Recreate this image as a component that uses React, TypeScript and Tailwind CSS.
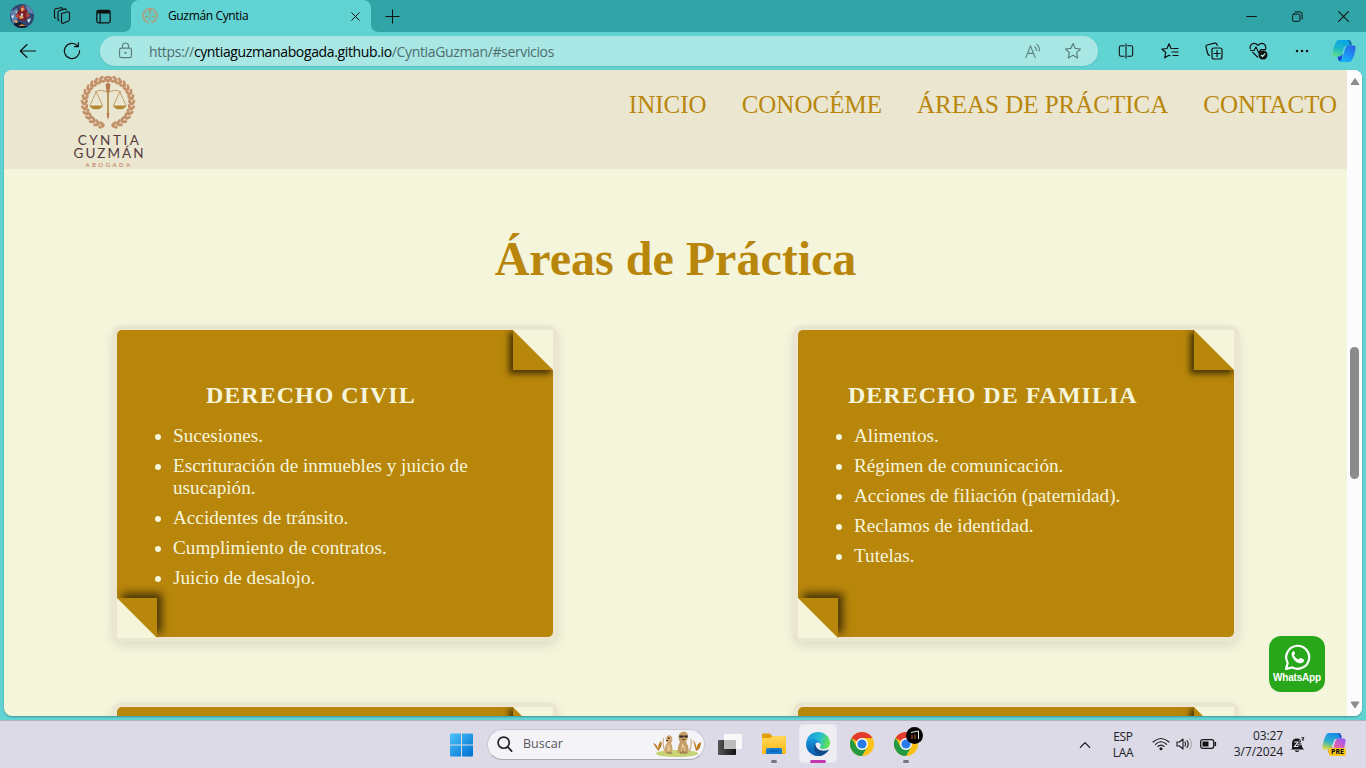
import React from "react";

type IconProps = { d: string; size?: number; stroke?: string; width?: number; className?: string; children?: React.ReactNode };

function Icon({ d, size = 18, stroke = "#111", width = 1.2, className = "", children }: IconProps) {
  return (
    <svg width={size} height={size} viewBox="0 0 18 18" fill="none" stroke={stroke} strokeWidth={width} strokeLinecap="round" strokeLinejoin="round" className={className}>
      <path d={d} />
      {children}
    </svg>
  );
}

const STAR = "M9 1.5 11.2 6.4 16.5 7 12.6 10.6 13.7 15.9 9 13.2 4.3 15.9 5.4 10.6 1.5 7 6.8 6.4Z";

function Avatar() {
  return (
    <svg width="24" height="24" viewBox="0 0 24 24">
      <defs><clipPath id="av"><circle cx="12" cy="12" r="12" /></clipPath></defs>
      <g clipPath="url(#av)">
        <rect width="24" height="24" fill="#2d4672" />
        <path d="M0 8 7 4 10 12 3 20ZM15 1 24 4V10L18 9Z" fill="#5e80ab" />
        <path d="M8 7 12 3 17 6 18 12 15 17 9 16 6 12Z" fill="#7d2027" />
        <path d="M10 3 14 1 15 6 12 8ZM5 11 9 10 8 15ZM16 8 20 11 17 15Z" fill="#b84a3c" />
        <path d="M11 4h3l-1 3h-2ZM9 12l3-1 2 3-4 1ZM3 17 7 16 8 20Z" fill="#d9a266" />
        <path d="M11 9.500h2v2h-2ZM5 8 7 7 7 9ZM17 16 21 14 19 19ZM1 12 4 11 3 15Z" fill="#d8e9f4" />
        <path d="M4 20 10 18 15 21 18 24H5Z" fill="#141a2c" />
        <path d="M8 22 12 20 16 22Z" fill="#c78b35" />
      </g>
    </svg>
  );
}

function CopilotMark({ size, pre = false }: { size: number; pre?: boolean }) {
  const id = pre ? "cp" : "ce";
  return (
    <svg width={size} height={size} viewBox="0 0 24 24">
      <defs>
        <linearGradient id={id + "a"} x1="0.5" y1="0" x2="0.2" y2="1">
          <stop offset="0" stopColor={pre ? "#1b8de8" : "#0aa5e6"} />
          <stop offset=".5" stopColor={pre ? "#2eb0c8" : "#19b5c8"} />
          <stop offset="1" stopColor={pre ? "#dfdc3c" : "#5fe08a"} />
        </linearGradient>
        <linearGradient id={id + "b"} x1="0.8" y1="0" x2="0.2" y2="1">
          <stop offset="0" stopColor={pre ? "#9b5cf2" : "#2a63e0"} />
          <stop offset=".5" stopColor={pre ? "#e05fb0" : "#1e8cf3"} />
          <stop offset="1" stopColor={pre ? "#f9a15c" : "#12b6f8"} />
        </linearGradient>
      </defs>
      <path d="M13 1h3.500q2 0 2.700 2L20 6.500h-5.500L11 8Z" fill={pre ? "#2453c9" : "#0b6aa8"} />
      <path d="M5.500 15h5l-1 7.500H9q-2.200 0-3-2.500Z" fill={pre ? "#f0a13a" : "#1746d8"} />
      <path d="M7 1h7.500q2 0 2.500 1.800l1 3.700h-3.500q-2 0-2.700 2.200L9.500 16Q9 17.500 7 17.500H2.500Q0 17.500.4 14.500 1.200 8 4 3 5 1 7 1Z" fill={`url(#${id}a)`} />
      <path d="M17 23H9.500q-2 0-1-1.800 1.600-.8 2.200-3L13.200 9.300Q14 6.500 16.500 6.500h5Q24 6.500 23.600 9.500 22.800 16 20 21 19 23 17 23Z" fill={`url(#${id}b)`} />
    </svg>
  );
}

const leaves = Array.from({ length: 14 }, (_, i) => {
  const angle = 102 + i * 12.4;
  const a = (angle * Math.PI) / 180;
  return { x: 28 + 24 * Math.cos(a), y: 27 + 24 * Math.sin(a), r: angle + 90 };
});

function LogoDrawing({ size }: { size: number }) {
  const side = leaves.map((l, i) => (
    <g key={i} transform={`translate(${l.x} ${l.y}) rotate(${l.r})`}>
      <ellipse cx="1.500" cy="-1.600" rx="3.300" ry="1.500" transform="rotate(-28 1.500 -1.600)" />
      <ellipse cx="1.500" cy="1.600" rx="3.300" ry="1.500" transform="rotate(28 1.500 1.600)" />
    </g>
  ));
  return (
    <svg width={size} height={size * 0.96} viewBox="0 0 56 54">
      <g fill="#c4926a">{side}</g>
      <g fill="#c4926a" transform="translate(56 0) scale(-1 1)">{side}</g>
      <g stroke="#b28a4e" fill="none" strokeWidth=".8">
        <path d="M15 16Q22 13 28 17Q34 13 41 16M16 16 9.500 30M16 16 22.500 30M40 16 33.500 30M40 16 46.500 30" />
        <path d="M28 9V42" strokeWidth="1.800" />
      </g>
      <path d="M9 30h14q-2 4-7 4t-7-4ZM33 30h14q-2 4-7 4t-7-4Z" fill="#b18a32" />
      <path d="M25.500 8.500 28 7 30.500 8.500 29.500 16h-3ZM26.500 38h3l-1.500 7Z" fill="#b77b50" />
    </svg>
  );
}

function TabStrip() {
  return (
    <div className="flex h-8 items-center bg-[#31a4a8]">
      <div className="ml-[10px] flex w-6 justify-center"><Avatar /></div>
      <div className="ml-[19px] flex w-[18px]">
        <Icon width={1.1} d="M8.500 6.500 15 4.800Q16.300 4.600 16.500 6V12.500Q16.400 13.500 15.500 13.900L10 16.300Q8.500 16.600 8.500 15V7.500Q8.500 6.600 9.500 6.200M6 13.500Q5 13.800 5 12.500V5Q5 4 6 3.700L12 1.900Q13 1.700 13.300 2.900M2.800 11Q1.500 11.300 1.500 10V3Q1.500 2 2.500 1.700L8 .7Q9 .5 9.300 1.600" />
      </div>
      <div className="ml-[25px] flex w-4">
        <Icon size={15} width={1.5} d="M3 1.500H15Q17 1.500 17 3.500V14.500Q17 16.500 15 16.500H3Q1 16.500 1 14.500V3.500Q1 1.500 3 1.500ZM5 6V16"><path d="M1.500 3.800H16.500" strokeWidth="3.400" strokeLinecap="butt" /></Icon>
      </div>
      <div className="relative ml-[19px] flex h-8 w-[240px] items-center rounded-t-lg bg-[#62d3d3]">
        <svg className="absolute bottom-0 -left-2" width="8" height="8"><path d="M8 0V8H0Q8 8 8 0Z" fill="#62d3d3" /></svg>
        <svg className="absolute -right-2 bottom-0" width="8" height="8"><path d="M0 0V8H8Q0 8 0 0Z" fill="#62d3d3" /></svg>
        <div className="ml-[11px] w-4"><LogoDrawing size={16} /></div>
        <span className="ml-[10px] w-[180px] text-[12px] tracking-[-0.36px] whitespace-nowrap text-black">Guzmán Cyntia</span>
        <Icon size={9} width={2} d="M1.500 1.500 16.500 16.500M16.500 1.500 1.500 16.500" className="ml-[3px]" />
      </div>
      <div className="ml-[14px] flex w-[15px]"><Icon size={15} width={1.2} d="M9 1V17M1 9H17" /></div>
      <div className="ml-auto flex">
        <div className="flex w-[46px] justify-center"><Icon size={11} width={1.6} d="M1 9H17" /></div>
        <div className="flex w-[46px] justify-center"><Icon size={11} width={1.6} d="M3 5H11Q13 5 13 7V15Q13 17 11 17H3Q1 17 1 15V7Q1 5 3 5ZM5 1.500H13Q16.500 1.500 16.500 5V13" /></div>
        <div className="flex w-[46px] justify-center"><Icon size={11} width={1.7} d="M1 1 17 17M17 1 1 17" /></div>
      </div>
    </div>
  );
}

function Cell({ children }: { children: React.ReactNode }) {
  return <div className="flex w-11 justify-center">{children}</div>;
}

function Toolbar() {
  return (
    <div className="flex h-[38px] items-center bg-[#62d3d3] pl-[6px]">
      <Cell><Icon d="M16.500 9H1.500M8 2.500 1.300 9 8 15.500" width={1.1} /></Cell>
      <Cell><Icon d="M16.600 8.500A7.600 7.600 0 1 1 14.600 3.800M15.400 .8V4.600H11.500" width={1.2} /></Cell>
      <div className="ml-[6px] flex h-[30px] w-[998px] items-center rounded-full bg-[#a9e7e5] shadow-[0_1px_2px_rgba(0,80,80,0.12)]">
        <Icon stroke="#5c7f7e" size={17} className="-mt-px ml-[17px]" d="M4.500 6.500H13.500Q15.300 6.500 15.300 8.300V14.700Q15.300 16.500 13.500 16.500H4.500Q2.700 16.500 2.700 14.700V8.300Q2.700 6.500 4.500 6.500ZM5.800 6.500V4.400Q5.800 1 9 1T12.200 4.400V6.500"><circle cx="9" cy="11.500" r=".6" fill="#5c7f7e" /></Icon>
        <span className="ml-[15px] flex-1 text-[14px] tracking-[-0.36px] whitespace-nowrap text-[#4f6d6d]">https://<span className="text-black">cyntiaguzmanabogada.github.io</span>/CyntiaGuzman/#servicios</span>
        <Icon stroke="#5c8080" size={17} d="M2 15.500 6.900 3 11.800 15.500M3.700 11H10M11.500 4Q13.500 5.500 13 8M13.500 1.500Q17 4.500 16 8.500" />
        <Icon stroke="#5c8080" className="mr-[16px] ml-[23px]" d={STAR} />
      </div>
      <div className="ml-[6px] flex items-center">
        <Cell><Icon size={16} width={1.2} d="M7 3H3.500Q1.500 3 1.500 5V13Q1.500 15 3.500 15H7M11 3H14.500Q16.500 3 16.500 5V13Q16.500 15 14.500 15H11M9 1V17" /></Cell>
        <Cell><Icon size={18} width={1.2} d="M10.800 6.500H10L8 1.800 6 6.500 1 7.200 4.800 10.500 3.700 15.800 8 13.200 9 13.700M12 6.500H17M11 10H17M12 13.500H17" /></Cell>
        <Cell><Icon size={18} width={1.2} d="M9 6H15Q17 6 17 8V15Q17 17 15 17H9Q7 17 7 15V8Q7 6 9 6ZM12 8.500V14.500M9 11.500H15M4.500 13.500Q3 13 2.500 11L1 5Q.7 3.500 2.200 3L9.500 1.200Q11.500 .8 12 2.500L12.300 3.500" /></Cell>
        <Cell><svg width="19" height="18" viewBox="0 0 19 18" fill="none" stroke="#111" strokeWidth="1.200" strokeLinejoin="round"><path d="M1.500 7.200Q.2 4 3 2 6 .2 9 3.300 12 .2 15 2 17.500 4 16.600 7M3.500 10 9 15.500M1 8.500H5L7 5 9.800 11 11.500 7.700H17" /><circle cx="14" cy="13" r="4.500" fill="#111" stroke="none" /><path d="m12 13 1.500 1.500 2.700-3" stroke="#a9e7e5" /></svg></Cell>
        <Cell><svg width="14" height="4"><g fill="#111"><circle cx="2" cy="2" r="1.250" /><circle cx="7" cy="2" r="1.250" /><circle cx="12" cy="2" r="1.250" /></g></svg></Cell>
        <div className="flex w-10 justify-center"><CopilotMark size={24} /></div>
      </div>
    </div>
  );
}

function Card({ title, items, offset }: { title: string; items: string[]; offset: string }) {
  return (
    <article className="relative h-[307px] w-[436px] rounded-[5px] bg-[#b8860b] px-8 pt-[51px] text-[#f5f5dc] shadow-[0_0_0_5px_#ebe6d0,0_4px_12px_4px_rgba(0,0,0,0.12)]">
      <svg className="absolute top-0 right-0 size-10 shadow-[-3px_3px_6px_1px_rgba(0,0,0,0.6)] [clip-path:inset(0_0_-14px_-14px)]" viewBox="0 0 40 40"><rect width="40" height="40" fill="#b8860b" /><path d="M0 0H40V40Z" fill="#f5f5dc" /></svg>
      <svg className="absolute -bottom-px left-0 size-10 shadow-[5px_-5px_8px_rgba(0,0,0,0.6)] [clip-path:polygon(0_-18px,58px_-18px,58px_39px,40px_39px,40px_40px,0_40px)]" viewBox="0 0 40 40"><rect width="40" height="40" fill="#b8860b" /><path d="M0 0V40H40Z" fill="#f5f5dc" /></svg>
      <h2 className={`text-[24px] leading-[28px] font-bold tracking-[1px] whitespace-nowrap ${offset}`}>{title}</h2>
      <ul className="mt-4 list-disc pl-6 text-[19.2px] leading-[22px]">
        {items.map((t) => <li key={t} className="mb-2 max-w-[330px]">{t}</li>)}
      </ul>
    </article>
  );
}

function Page() {
  return (
    <div className="relative mx-1 flex h-[646px] overflow-hidden rounded-lg bg-[#f5f5dc] shadow-[0_1px_2px_rgba(0,60,60,0.4)]">
      <div className="flex h-[646px] w-[1343px] flex-col overflow-hidden font-['Liberation_Serif',serif]">
        <header className="flex h-[99px] shrink-0 justify-between bg-[#ebe6d0]">
          <div className="ml-[64px] flex w-20 flex-col items-center pt-[6px] font-[Lato,sans-serif]">
            <LogoDrawing size={56} />
            <div className="mt-[5px] ml-[3px] text-[13.500px] leading-[13px] tracking-[2.500px] text-[#54393e]">CYNTIA</div>
            <div className="ml-[3px] text-[13.500px] leading-[13px] tracking-[2px] whitespace-nowrap text-[#54393e]">GUZMÁN</div>
            <div className="ml-[2px] text-[6px] leading-[9px] tracking-[2.500px] text-[#b97555]">ABOGADA</div>
          </div>
          <nav className="mr-[10px] flex gap-[35px] pt-[20px] text-[25px] leading-[29px] whitespace-nowrap text-[#b8860b]">
            <a>INICIO</a><a>CONOCÉME</a><a>ÁREAS DE PRÁCTICA</a><a>CONTACTO</a>
          </nav>
        </header>
        <h1 className="mt-[62px] text-center text-[48px] leading-[55px] font-bold text-[#b8860b]">Áreas de Práctica</h1>
        <div className="mt-[44px] ml-[113px] grid grid-cols-[436px_436px] gap-x-[245px] gap-y-[70px]">
          <Card title="DERECHO CIVIL" offset="ml-[57px]" items={["Sucesiones.", "Escrituración de inmuebles y juicio de usucapión.", "Accidentes de tránsito.", "Cumplimiento de contratos.", "Juicio de desalojo."]} />
          <Card title="DERECHO DE FAMILIA" offset="ml-[18px]" items={["Alimentos.", "Régimen de comunicación.", "Acciones de filiación (paternidad).", "Reclamos de identidad.", "Tutelas."]} />
          <Card title="" offset="" items={[]} />
          <Card title="" offset="" items={[]} />
        </div>
      </div>
      <div className="flex w-[15px] flex-col items-center bg-[#fcfcfc]">
        <svg width="10" height="7" className="mt-[8px]"><path d="M5 .5 9 6.500H1Z" fill="#8b8b8b" stroke="#8b8b8b" strokeLinejoin="round" /></svg>
        <div className="mt-[262px] h-[132px] w-[9px] rounded-full bg-[#8b8b8b]" />
        <svg width="10" height="8" className="mt-auto mb-[7px]"><path d="M5 7 9 1H1Z" fill="#8b8b8b" stroke="#8b8b8b" strokeLinejoin="round" /></svg>
      </div>
      <div className="absolute right-[37px] bottom-[24px] flex h-14 w-14 flex-col items-center rounded-xl bg-[#29a71a] pt-2 text-white">
        <svg width="27" height="27" viewBox="0 0 27 27">
          <path d="M2 25 3.700 19A11.500 11.500 0 1 1 8.200 23.400Z" fill="none" stroke="#fff" strokeWidth="2.200" strokeLinejoin="round" />
          <path d="M9.300 7q-2.600 1.800-1.300 5.200 2.200 5.300 7.300 7 3.500.7 4.700-2.300.3-1.300-.5-1.700l-2.700-1.200q-.7-.2-1.200.5l-1 1.100q-3.100-1.100-4.700-4.100l.9-1.200q.4-.6.2-1.200L10.100 7.400Q9.900 6.900 9.300 7Z" fill="#fff" />
        </svg>
        <span className="mt-px font-['Liberation_Sans',sans-serif] text-[10px] leading-[12px] font-bold tracking-[-0.2px]">WhatsApp</span>
      </div>
    </div>
  );
}

function Chrome() {
  return (
    <svg width="24" height="24" viewBox="0 0 24 24">
      <circle cx="12" cy="12" r="12" fill="#fbc116" />
      <path d="M12 12 1.600 6A12 12 0 0 1 22.400 6H12Z" fill="#e33b2e" />
      <path d="M1.600 6A12 12 0 0 0 12 24L17.200 15 12 12 6.800 15Z" fill="#249a45" />
      <circle cx="12" cy="12" r="6" fill="#fff" /><circle cx="12" cy="12" r="4.600" fill="#2a7be8" />
    </svg>
  );
}

function EdgeLogo() {
  return (
    <svg width="24" height="24" viewBox="0 0 24 24">
      <defs>
        <linearGradient id="e1" x1="0" y1=".3" x2="1" y2=".5"><stop stopColor="#1998dc" /><stop offset=".55" stopColor="#28bdd0" /><stop offset="1" stopColor="#67e54b" /></linearGradient>
        <linearGradient id="e2" x1="0" y1="0" x2="0" y2="1"><stop stopColor="#1594dd" /><stop offset="1" stopColor="#0b58a8" /></linearGradient>
      </defs>
      <path d="M.3 10.500C1.200 4 6 0 12 0c7 0 12 5 12 10.800 0 4-3 6.400-6.300 6.400-3 0-4.300-1.200-3.800-2 1.500-1.700.8-5.200-3-6.500C7 7.300 2 8 .3 10.500Z" fill="url(#e1)" />
      <path d="M.2 10.500C1.600 7.500 5.600 6.300 9.300 7.300c3.500 1 5.200 3 5.200 5.200-1-2-3-2.500-4.500-1.300C7.600 13 8.700 18 12.500 20.500c2 1.400 4.500 2 6.500 1.400A12 12 0 0 1 .2 10.500Z" fill="url(#e2)" />
      <path d="M9.300 11.800C6.600 14.500 8.200 21 14 23.700c3.600-.5 6.600-2.600 8.700-5.500.3-.5-.1-.8-.6-.5-5 2.500-12.300.5-12.800-5.900Z" fill="#114a8b" />
    </svg>
  );
}

function Meerkats() {
  return (
    <svg width="48" height="26" viewBox="0 0 48 26">
      <ellipse cx="24" cy="22.500" rx="21" ry="3.400" fill="#c5d373" />
      <path d="M5 20 0 12q5 1 5 8 0-8 3-10 2 5-3 10M43 20l-3-11q4 4 3 11 0-7 5-9 0 7-5 9" fill="#b77a1c" />
      <path d="M10.500 7q-1.500 8 2 14M38 8q1 8-2 13" fill="none" stroke="#c9ad85" strokeWidth="1.200" />
      <path d="M12 22q-1-6 2-10-2-4 0-7 3-2 5 1 1 4-1 6 3 6 0 10Z" fill="#cda56e" />
      <path d="M25 22q-1-7 2-11-3-5 0-9 4-3 7 0 2 5-1 9 4 6 2 11Z" fill="#c59c66" />
      <path d="M15 13q3 3 2 7h-3ZM29 12q4 3 3 8h-4Z" fill="#e7c791" />
      <path d="M26 4.500h4.500v2h-4ZM31 4.500h4l-.5 2H31.500Z" fill="#30252a" />
      <path d="M29.500 8h2v1h-2ZM15 6.500h1.500v1.500H15ZM13 9h2v1h-2Z" fill="#463426" />
      <path d="M14 22h5M27 22h7M30 17v4" stroke="#8d6840" />
    </svg>
  );
}

function Taskbar() {
  return (
    <div className="flex h-12 items-center border-t border-[#b1b2be] bg-[#dbdae6] text-[#202024]">
      <svg width="24" height="24" viewBox="0 0 24 24" className="ml-[450px]">
        <defs><linearGradient id="win" x1="0" y1="0" x2="1" y2="1"><stop stopColor="#49c3fa" /><stop offset="1" stopColor="#006ed0" /></linearGradient></defs>
        <path d="M0 1Q0 .5 1 .5H11V11.500H0ZM12 .5H22Q23 .5 23 1V11.500H12ZM0 12.500H11V23.500H1Q0 23.500 0 22.500ZM12 12.500H23V22.500Q23 23.500 22 23.500H12Z" fill="url(#win)" />
      </svg>
      <div className="-mt-px ml-[13px] flex h-[31px] w-[218px] items-center rounded-full border border-[#c9c9d3] border-b-[#a9a9b3] bg-[#f4f3f8]">
        <Icon size={16} width={1.900} stroke="#222" className="ml-[9px]" d="M13.800 7.500A6.300 6.300 0 1 1 1.200 7.500 6.300 6.300 0 0 1 13.800 7.500ZM12 12.300 16.500 17" />
        <span className="ml-[10px] flex-1 pt-px text-[12.500px] text-[#55555b]">Buscar</span>
        <div className="mr-[3px]"><Meerkats /></div>
      </div>
      <div className="ml-[13px] flex w-6">
        <svg width="24" height="24" className="-mt-[2px]"><defs><linearGradient id="tv"><stop stopColor="#555" /><stop offset="1" stopColor="#111" /></linearGradient></defs><rect y="8" width="18" height="15" rx="1" fill="url(#tv)" /><rect x="6" y="2" width="18" height="15" rx="1" fill="#f8f8f8" /><rect x="6" y="8" width="12" height="9" fill="#bcbcbc" /></svg>
      </div>
      <div className="relative ml-[20px] flex w-6">
        <svg width="24" height="24" className="-mt-px"><defs><linearGradient id="fo" x1="0" y1="0" x2="0" y2="1"><stop stopColor="#ffd75a" /><stop offset="1" stopColor="#f9b817" /></linearGradient></defs><path d="M0 2.500Q0 1.500 1 1.500H8L10 4H23Q24 4 24 5V9H0Z" fill="#e29e08" /><path d="M0 7Q0 6 1 6H8L11 4H23Q24 4 24 5V21Q24 22 23 22H1Q0 22 0 21Z" fill="url(#fo)" /><path d="M4 22V18Q4 16 6 16H18Q20 16 20 18V22Z" fill="#147bd1" /><path d="M7 19H17" stroke="#075da7" strokeWidth="1.200" /></svg>
        <span className="absolute -bottom-[7px] left-[9px] h-[3px] w-[6px] rounded-full bg-[#77777f]" />
      </div>
      <div className="relative ml-[13px] flex h-[39px] w-[38px] -translate-y-px items-center justify-center rounded border border-[#e7e6ee] bg-[#eeedf4]">
        <EdgeLogo />
        <span className="absolute -bottom-px left-[10px] h-[3px] w-4 rounded-full bg-[#c138b0]" />
      </div>
      <div className="-mt-px ml-[13px] w-6"><Chrome /></div>
      <div className="relative -mt-px ml-5 w-6">
        <Chrome />
        <svg className="absolute -top-[5px] left-[12px]" width="17" height="17"><circle cx="8.500" cy="8.500" r="8.500" fill="#050505" /><path d="M5 5.500 12.500 4V12" stroke="#eee" fill="none" /><path d="M6 8V12M9 7.500V12" stroke="#934425" strokeWidth="1.400" /></svg>
        <span className="absolute -bottom-[7px] left-[9px] h-[3px] w-[6px] rounded-full bg-[#77777f]" />
      </div>
      <div className="mr-[20px] ml-auto flex items-center">
        <Icon size={12} width={1.8} d="M2 12.500 9 5.500 16 12.500" />
        <div className="ml-[17px] w-[30px] text-center text-[12px] leading-4 tracking-[-0.3px]">ESP<br />LAA</div>
        <svg width="18" height="14" viewBox="0 0 18 14" fill="none" stroke="#17171a" strokeWidth="1.100" strokeLinecap="round" className="-mt-[2px] ml-[14px]"><path d="M1 5Q9-2 17 5M3.400 7.300Q9 2.200 14.600 7.300M5.900 9.500Q9 6.800 12.100 9.500" /><circle cx="9" cy="11.700" r="1" fill="#111" /></svg>
        <svg width="17" height="14" viewBox="0 0 17 14" fill="none" stroke="#17171a" strokeWidth="1.100" strokeLinecap="round" strokeLinejoin="round" className="-mt-[2px] ml-[6px]"><path d="M1 5H3.500L7 2V12L3.500 9H1ZM9 5Q10.300 7 9 9M11 3.500Q13.500 7 11 10.500" /><path d="M13.500 1.500Q17.500 7 13.500 12.500" stroke="#aaa" /></svg>
        <svg width="17" height="12" viewBox="0 0 17 12" className="-mt-[2px] ml-[7px]"><rect x=".7" y="1.700" width="13" height="8.600" rx="2" fill="none" stroke="#17171a" strokeWidth="1.300" /><rect x="2.500" y="3.500" width="6" height="5" fill="#111" /><path d="M15.400 4V8" stroke="#111" strokeWidth="1.400" /></svg>
        <div className="-mt-px ml-[12px] w-[54px] text-right text-[12px] leading-4 tracking-[-0.1px] whitespace-nowrap">03:27<br />3/7/2024</div>
        <svg width="15" height="16" viewBox="0 0 15 16" className="ml-[7px]"><path d="M2 12V6.500Q2 1.500 7 1.500 12 1.500 12 6.500V10L14 12.500H0ZM4.500 13.500H9.500Q7 16.500 4.500 13.500" fill="#161619" /><path d="M4 5H8L4.500 9.500H8.500" stroke="#dddce8" fill="none" strokeWidth="1.200" /><path d="M9 4H12L9.500 7H12.500" stroke="#dddce8" strokeWidth="2.500" fill="none" /><path d="M8.500 4H11L8.500 7H11.500M11.500 .7H14L12 3H14" stroke="#161619" fill="none" /></svg>
        <div className="relative ml-[17px] -translate-y-px">
          <CopilotMark size={24} pre />
          <span className="absolute top-[16px] left-[7px] h-[8px] w-[17px] rounded-[2px] bg-[#fbc51e] text-center text-[7px] leading-[8px] font-bold text-black">PRE</span>
        </div>
      </div>
    </div>
  );
}

export default function App() {
  return (
    <div className="flex h-[768px] w-[1366px] flex-col overflow-hidden bg-[#62d3d3] font-['Open_Sans','Noto_Sans',sans-serif]">
      <TabStrip />
      <Toolbar />
      <Page />
      <div className="mt-auto"><Taskbar /></div>
    </div>
  );
}
